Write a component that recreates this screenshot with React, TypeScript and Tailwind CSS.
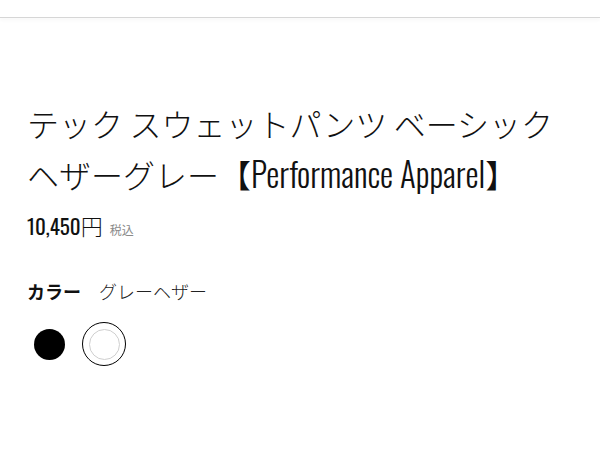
const FONT_LATIN = "font-['Oswald','Noto_Sans_CJK_JP',sans-serif]";

const SWATCHES = [
  { name: "ブラック", className: "bg-black" },
  { name: "グレーヘザー", className: "bg-white border border-[#cfcfcf]" },
];

export default function App() {
  const selected = "グレーヘザー";

  return (
    <div className="min-h-screen bg-white text-[#111] font-['Noto_Sans_CJK_JP',sans-serif]">
      {/* Header edge */}
      <div className="h-[18px] border-b border-[#d6d6d6] shadow-[0_3px_3px_rgba(0,0,0,0.025)]" />

      <div className="px-[27px] pt-[79px]">
        {/* Product title */}
        <h1 className={`${FONT_LATIN} text-[32px] leading-[51px] font-light text-[#111]`}>
          テック スウェットパンツ ベーシック ヘザーグレー【<span className="text-[33px] font-[350]">Performance Apparel</span>】
        </h1>

        {/* Price */}
        <div className="mt-[11px] flex items-baseline gap-[7px]">
          <span className={`${FONT_LATIN} text-[21px] leading-[30px] font-normal text-[#111]`}>
            10,450<span className="font-['Noto_Sans_CJK_JP',sans-serif] font-light text-[22px]">円</span>
          </span>
          <span className="text-[12px] text-[#8a8a8a]">税込</span>
        </div>

        {/* Color */}
        <div className="mt-[37px] flex items-center gap-[18px] text-[18px] leading-[27px]">
          <span className="font-bold">カラー</span>
          <span className="font-light text-[#222]">{selected}</span>
        </div>

        <div className="mt-[17px] flex gap-[11px]">
          {SWATCHES.map((s) => (
            <button
              key={s.name}
              title={s.name}
              className={
                "w-[44px] h-[44px] rounded-full flex items-center justify-center " +
                (s.name === selected ? "border border-black" : "border border-transparent")
              }
            >
              <span className={"block w-[31px] h-[31px] rounded-full " + s.className} />
            </button>
          ))}
        </div>
      </div>
    </div>
  );
}
